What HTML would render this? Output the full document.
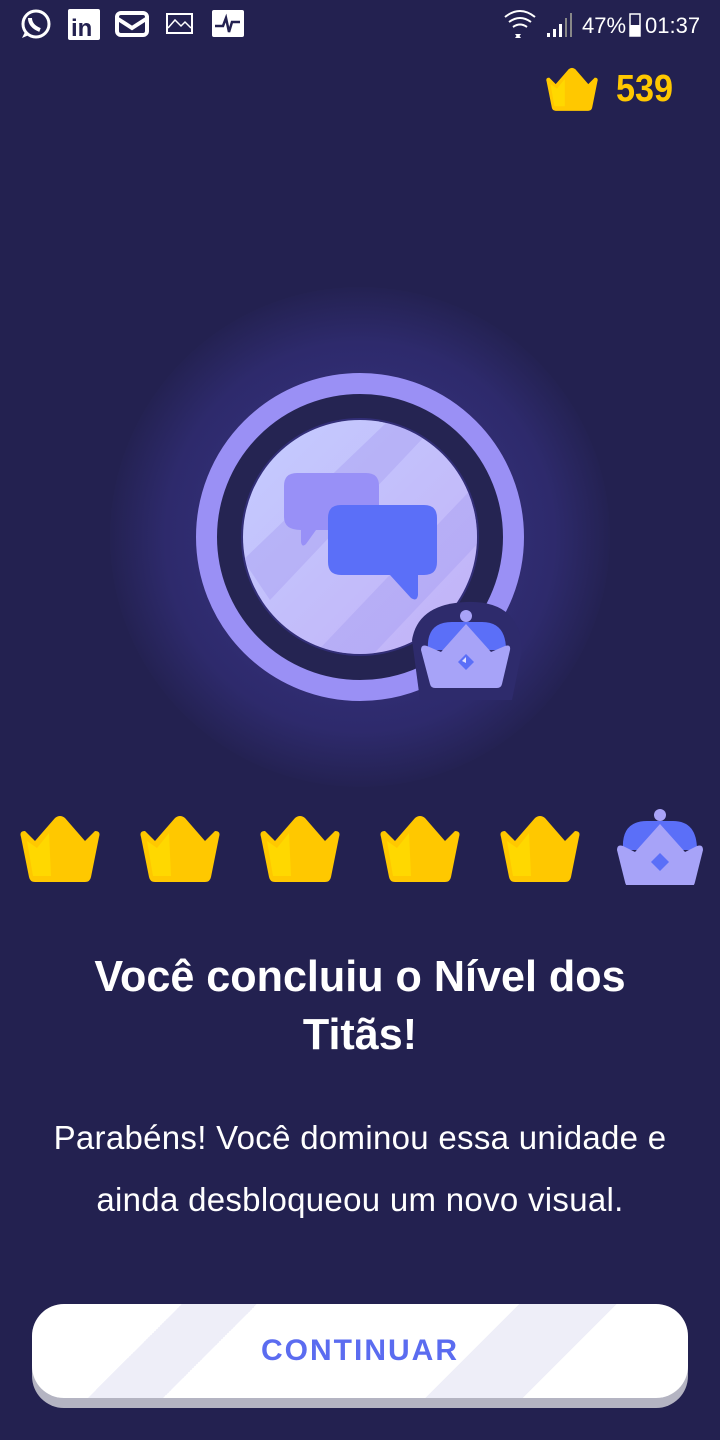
<!DOCTYPE html>
<html><head><meta charset="utf-8"><style>
body{margin:0;width:720px;height:1440px;background:#232150;position:relative;overflow:hidden;font-family:"Liberation Sans",sans-serif}
.abs{position:absolute}
</style></head><body>
<div class="abs" style="left:110px;top:287px;width:500px;height:500px;border-radius:50%;background:radial-gradient(circle,rgba(80,72,190,0.5) 0%,rgba(62,56,150,0.4) 55%,rgba(35,33,80,0) 72%)"></div>
<!-- status bar -->
<svg class="abs" style="left:0;top:0" width="720" height="50">
<g fill="none" stroke="#fff" stroke-width="3">
<circle cx="36" cy="24" r="13"/><path d="M30 18q0 8 10 12" stroke-width="4"/>
</g>
<path d="M22 38l3-6 4 3z" fill="#fff"/>
<rect x="68" y="9" width="32" height="31" rx="2" fill="#fff"/>
<text x="71" y="36" font-size="24" font-weight="bold" fill="#232150" font-family="Liberation Sans">in</text>
<rect x="117" y="13" width="30" height="22" rx="4" fill="none" stroke="#fff" stroke-width="4"/>
<path d="M118 19l14 9 14-9" fill="none" stroke="#fff" stroke-width="4"/>
<rect x="167" y="14" width="25" height="19" fill="none" stroke="#fff" stroke-width="2"/>
<path d="M168 28l7-8 6 6 4-4 6 6" fill="none" stroke="#fff" stroke-width="1.5"/>
<rect x="212" y="10" width="32" height="27" rx="2" fill="#fff"/>
<path d="M215 26h8l3-8 3 14 3-10h8" fill="none" stroke="#232150" stroke-width="2.5"/>
<path d="M505 17q15-12 30 0M509 22q11-8 22 0M513 27q7-5 14 0" fill="none" stroke="#fff" stroke-width="2"/>
<path d="M515 34h6l-3 4zM518 34l3 4h-6z" fill="#fff"/>
<rect x="547" y="33" width="3" height="4" fill="#fff"/><rect x="553" y="29" width="3" height="8" fill="#fff"/><rect x="559" y="24" width="3" height="13" fill="#fff"/><rect x="565" y="18" width="2" height="19" fill="#888"/><rect x="570" y="13" width="2" height="24" fill="#888"/>
<text x="582" y="33" font-size="22" fill="#fff" font-family="Liberation Sans">47%</text>
<rect x="630" y="14" width="10" height="22" fill="none" stroke="#fff" stroke-width="1.5"/><rect x="630" y="25" width="10" height="11" fill="#fff"/>
<text x="645" y="33" font-size="22" fill="#fff" font-family="Liberation Sans">01:37</text>
</svg>
<!-- top crown -->
<svg class="abs" style="left:544px;top:66px" width="56" height="46" viewBox="0 0 86 67"><path d="M4 22Q2 16 8 16L18 26 38 3Q43-1 48 3L68 26 78 16Q84 16 82 22L74 62Q73 67 68 67H18Q13 67 12 62Z" fill="#ffc800"/><path d="M10 26L20 33 32 18 32 60 16 60Z" fill="#ffd800"/></svg>
<div class="abs" style="left:616px;top:68px;font-size:38px;font-weight:bold;color:#ffc800;transform:scaleX(0.9);transform-origin:left">539</div>
<!-- badge -->
<svg class="abs" style="left:190px;top:360px" width="340" height="350" viewBox="190 360 340 350">
<defs><linearGradient id="g" x1="0" y1="0" x2="1" y2="1"><stop offset="0" stop-color="#c4ccff"/><stop offset="1" stop-color="#c2b1f7"/></linearGradient>
<clipPath id="c"><circle cx="360" cy="537" r="117"/></clipPath></defs>
<circle cx="360" cy="537" r="153" fill="none" stroke="#9a90f5" stroke-width="22"/>
<circle cx="360" cy="537" r="131" fill="none" stroke="#252452" stroke-width="24"/>
<circle cx="360" cy="537" r="117" fill="url(#g)"/>
<g clip-path="url(#c)" fill="#a99ff2" opacity="0.45"><path d="M243 560L410 400 440 420 270 600Z"/><path d="M290 680L480 480 500 520 330 700Z"/></g>
<path d="M297 473h69q13 0 13 13v31q0 13-13 13h-50l-10 14q-4 4-5-2v-12q-17 0-17-13v-31q0-13 13-13z" fill="#9890f7"/>
<path d="M341 505h83q13 0 13 13v44q0 13-13 13h-6v20q-1 7-7 3l-21-23h-49q-13 0-13-13v-44q0-13 13-13z" fill="#5b6ff8"/>
<path d="M466 602 Q520 600 522 650 L512 700 420 700 412 640 Q418 604 466 602Z" fill="#2e2b6c"/>
<circle cx="466" cy="616" r="6" fill="#a9a3f8"/>
<path d="M428 650q-2-28 24-28h30q24 0 24 28z" fill="#5b6ff8"/>
<path d="M421 650q0-6 6-4l14 6 25-28 25 28 14-6q6-2 5 4l-8 34q-1 4-5 4h-62q-4 0-5-4z" fill="#a7a3f8"/>
<path d="M466 654l8 8-8 8-8-8z" fill="#5b6ff8"/><path d="M462 661l4-4v6z" fill="#e0e0ff"/>
</svg>
<!-- crowns row -->
<svg class="abs" style="left:0;top:805px" width="720" height="80">
<defs><g id="k"><path d="M4 22Q2 16 8 16L18 26 38 3Q43-1 48 3L68 26 78 16Q84 16 82 22L74 62Q73 67 68 67H18Q13 67 12 62Z" fill="#ffc800"/><path d="M10 26L20 33 32 18 34 61 16 61Z" fill="#ffd800"/></g></defs>
<use href="#k" x="17" y="10"/><use href="#k" x="137" y="10"/><use href="#k" x="257" y="10"/><use href="#k" x="377" y="10"/><use href="#k" x="497" y="10"/>
<g transform="translate(617,0)">
<ellipse cx="43" cy="10" rx="6" ry="6" fill="#a9a3f8"/>
<path d="M6 45q-2-29 24-29h26q24 0 24 29z" fill="#5b6ff8"/>
<path d="M0 45q0-6 6-4l12 6 25-28 25 28 12-6q6-2 6 4l-8 32q-1 5-5 5h-60q-4 0-5-5z" fill="#a7a3f8"/>
<path d="M43 48l9 9-9 9-9-9z" fill="#5b6ff8"/>
</g>
</svg>
<div class="abs" style="left:0;width:720px;top:948px;text-align:center;color:#fff;font-size:44px;font-weight:bold;line-height:58px;transform:scaleX(0.98)">Você concluiu o Nível dos<br>Titãs!</div>
<div class="abs" style="left:0;width:720px;top:1107px;text-align:center;color:#fff;font-size:33px;line-height:62px;letter-spacing:0.3px">Parabéns! Você dominou essa unidade e<br>ainda desbloqueou um novo visual.</div>
<div class="abs" style="left:32px;top:1310px;width:656px;height:98px;border-radius:32px;background:#b4b4c2"></div>
<div class="abs" style="left:32px;top:1304px;width:656px;height:94px;border-radius:32px;background:linear-gradient(135deg,#fff 20%,#eeeef8 20%,#eeeef8 30%,#fff 30%,#fff 65%,#eeeef8 65%,#eeeef8 78%,#fff 78%);text-align:center;line-height:94px;color:#5b6cf0;font-size:30px;font-weight:bold;letter-spacing:2px">CONTINUAR</div>
</body></html>
